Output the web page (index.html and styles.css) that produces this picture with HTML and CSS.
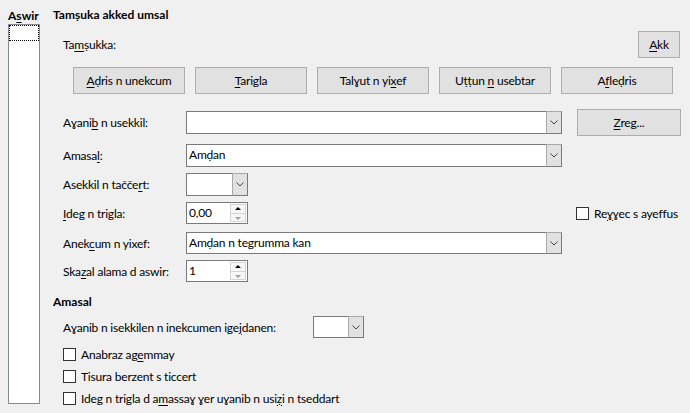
FILE: index.html
```html
<!DOCTYPE html>
<html>
<head>
<meta charset="utf-8">
<link rel="stylesheet" href="styles.css">
</head>
<body>
<div class="dialog">
  <div class="side">
    <div class="side-label">A<u>s</u>wir</div>
    <div class="listbox"><div class="focus"></div></div>
  </div>
  <div class="main">
    <div class="heading">Tamṣuka akked umsal</div>
    <div class="indent">
      <div class="row-items">
        <span>Ta<u>m</u>ṣukka:</span>
        <button class="btn btn-akk"><u>A</u>kk</button>
      </div>
      <div class="row-buttons">
        <button class="btn wbtn"><u>A</u>ḍris n unekcum</button>
        <button class="btn wbtn"><u>T</u>arigla</button>
        <button class="btn wbtn">Talɣut n yi<u>x</u>ef</button>
        <button class="btn wbtn">Uṭṭun <u>n</u> usebtar</button>
        <button class="btn wbtn">A<u>f</u>leḍris</button>
      </div>

      <div class="frow r1">
        <span>Aɣani<u>b</u> n usekkil:</span>
        <div class="combo"><span class="val"></span><span class="drop"><svg width="8" height="5" viewBox="0 0 8 5"><polyline points="0.5,0.5 4,4 7.5,0.5" fill="none" stroke="#444" stroke-width="1"/></svg></span></div>
        <button class="btn btn-zreg"><u>Z</u>reg...</button>
      </div>

      <div class="frow r2">
        <span>Amasa<u>l</u>:</span>
        <div class="combo"><span class="val">Amḍan</span><span class="drop"><svg width="8" height="5" viewBox="0 0 8 5"><polyline points="0.5,0.5 4,4 7.5,0.5" fill="none" stroke="#444" stroke-width="1"/></svg></span></div>
      </div>

      <div class="frow r3">
        <span>Asekkil n tačče<u>r</u>t:</span>
        <div class="combo small"><span class="val"></span><span class="drop"><svg width="8" height="5" viewBox="0 0 8 5"><polyline points="0.5,0.5 4,4 7.5,0.5" fill="none" stroke="#444" stroke-width="1"/></svg></span></div>
      </div>

      <div class="frow r4">
        <span><u>I</u>deg n trigla:</span>
        <div class="spin"><span class="val">0,00</span><span class="arrows"><span class="up"></span><span class="down"></span></span></div>
        <label class="check check-right"><span class="box"></span><span>Re<u>ɣ</u>ɣec s ayeffus</span></label>
      </div>

      <div class="frow r5">
        <span>Anek<u>c</u>um n yixef:</span>
        <div class="combo"><span class="val">Amḍan n tegrumma kan</span><span class="drop"><svg width="8" height="5" viewBox="0 0 8 5"><polyline points="0.5,0.5 4,4 7.5,0.5" fill="none" stroke="#444" stroke-width="1"/></svg></span></div>
      </div>

      <div class="frow r6">
        <span>Ska<u>z</u>al alama d aswir:</span>
        <div class="spin"><span class="val">1</span><span class="arrows"><span class="up"></span><span class="down"></span></span></div>
      </div>
    </div>

    <div class="heading h2">Amasal</div>
    <div class="indent">
      <div class="row-lang">
        <span class="lang-label">Aɣanib n isekkilen n inekcumen ige<u>j</u>danen:</span>
        <div class="combo tiny"><span class="val"></span><span class="drop"><svg width="8" height="5" viewBox="0 0 8 5"><polyline points="0.5,0.5 4,4 7.5,0.5" fill="none" stroke="#444" stroke-width="1"/></svg></span></div>
      </div>
      <div class="checks">
        <label class="check"><span class="box"></span><span>Anabraz ag<u>e</u>mmay</span></label>
        <label class="check"><span class="box"></span><span>Tisura berzent s ticcert</span></label>
        <label class="check"><span class="box"></span><span>Ideg n trigla d a<u>m</u>assaɣ ɣer uɣanib n usi<u>ẓ</u>i n tseddart</span></label>
      </div>
    </div>
  </div>
</div>
</body>
</html>
```

FILE: styles.css
```css
* { box-sizing: border-box; }
html, body {
  margin: 0;
  padding: 0;
  background: #f0f0f0;
  width: 690px;
  height: 413px;
  overflow: hidden;
}
body {
  font-family: Lato, "Noto Sans", sans-serif;
  font-size: 12px;
  letter-spacing: -0.2px;
  color: #000;
}
u { text-decoration-thickness: 1px; text-underline-offset: 2px; }

.dialog {
  display: flex;
  padding: 7px 9px 0 8px;
}
.side {
  width: 32px;
  flex: none;
  display: flex;
  flex-direction: column;
}
.side-label {
  font-weight: bold;
  letter-spacing: 0;
  line-height: 17px;
  height: 17px;
  white-space: nowrap;
}
.listbox {
  width: 32px;
  height: 380px;
  background: #fff;
  border: 1px solid #868a94;
}
.focus {
  height: 16px;
  border: 1px dotted #000;
}

.main {
  flex: 1;
  min-width: 0;
  margin-left: 13px;
  display: flex;
  flex-direction: column;
}
.heading {
  font-weight: bold;
  letter-spacing: 0;
  line-height: 16px;
  height: 16px;
}
.h2 { margin-top: 12px; }
.indent { padding-left: 10px; }

.btn {
  font: inherit;
  letter-spacing: inherit;
  color: #000;
  background: #e1e1e1;
  border: 1px solid #adadad;
  height: 27px;
  padding: 0;
  margin: 0;
}
.row-items {
  display: flex;
  align-items: center;
  justify-content: space-between;
  margin-top: 8px;
  height: 27px;
  padding-right: 1px;
}
.btn-akk { width: 42px; }
.row-buttons {
  display: flex;
  gap: 10px;
  margin-top: 9px;
  padding-left: 10px;
}
.wbtn { width: 112px; }

.frow {
  display: grid;
  grid-template-columns: 123px 391px 104px;
  align-items: center;
  white-space: nowrap;
}
.r1 { margin-top: 15px; height: 27px; }
.r2 { margin-top: 8px; height: 23px; }
.r3 { margin-top: 6px; height: 23px; }
.r4 { margin-top: 6px; height: 22px; }
.r5 { margin-top: 8px; height: 22px; }
.r6 { margin-top: 6px; height: 22px; }
.btn-zreg { width: 104px; }

.combo {
  display: flex;
  width: 376px;
  height: 23px;
  background: #fff;
  border: 1px solid #7a7a7a;
}
.r5 .combo { height: 22px; }
.combo.small { width: 62px; }
.combo.tiny { width: 51px; height: 22px; }
.combo .val {
  flex: 1;
  padding-left: 2px;
  line-height: 20px;
  white-space: nowrap;
}
.combo .drop {
  width: 16px;
  background: #e1e1e1;
  border: 1px solid #a8a8a8;
  margin: -1px -1px -1px 0;
  border-color: #a8a8a8 #7a7a7a #7a7a7a #a8a8a8;
  display: flex;
  align-items: center;
  justify-content: center;
}

.spin {
  display: flex;
  width: 62px;
  height: 22px;
  background: #fff;
  border: 1px solid #7a7a7a;
}
.spin .val {
  flex: 1;
  padding-left: 2px;
  line-height: 20px;
}
.spin .arrows {
  width: 16px;
  margin: 1px 1px 1px 0;
  display: flex;
  flex-direction: column;
  border: 1px solid #d4d4d4;
  background: #f7f7f7;
}
.spin .up, .spin .down {
  flex: 1;
  position: relative;
}
.spin .up { border-bottom: 1px solid #d4d4d4; }
.spin .up::after, .spin .down::after {
  content: "";
  position: absolute;
  left: 4px;
  top: 2px;
  border-left: 3px solid transparent;
  border-right: 3px solid transparent;
}
.spin .up::after { border-bottom: 3px solid #000; }
.spin .down::after { border-top: 3px solid #a0a0a0; top: 3px; }

.check {
  display: flex;
  align-items: center;
  gap: 5px;
  white-space: nowrap;
}
.check .box {
  width: 13px;
  height: 13px;
  background: #fff;
  border: 1px solid #333;
  flex: none;
}
.check-right { margin-left: -1px; grid-column: 3; }
.r4 .spin { grid-column: 2; }

.row-lang {
  display: flex;
  align-items: center;
  margin-top: 6px;
  height: 22px;
}
.lang-label { width: 250px; white-space: nowrap; }
.checks {
  display: flex;
  flex-direction: column;
  gap: 2px;
  margin-top: 6px;
}
.checks .check { height: 20px; }
```
